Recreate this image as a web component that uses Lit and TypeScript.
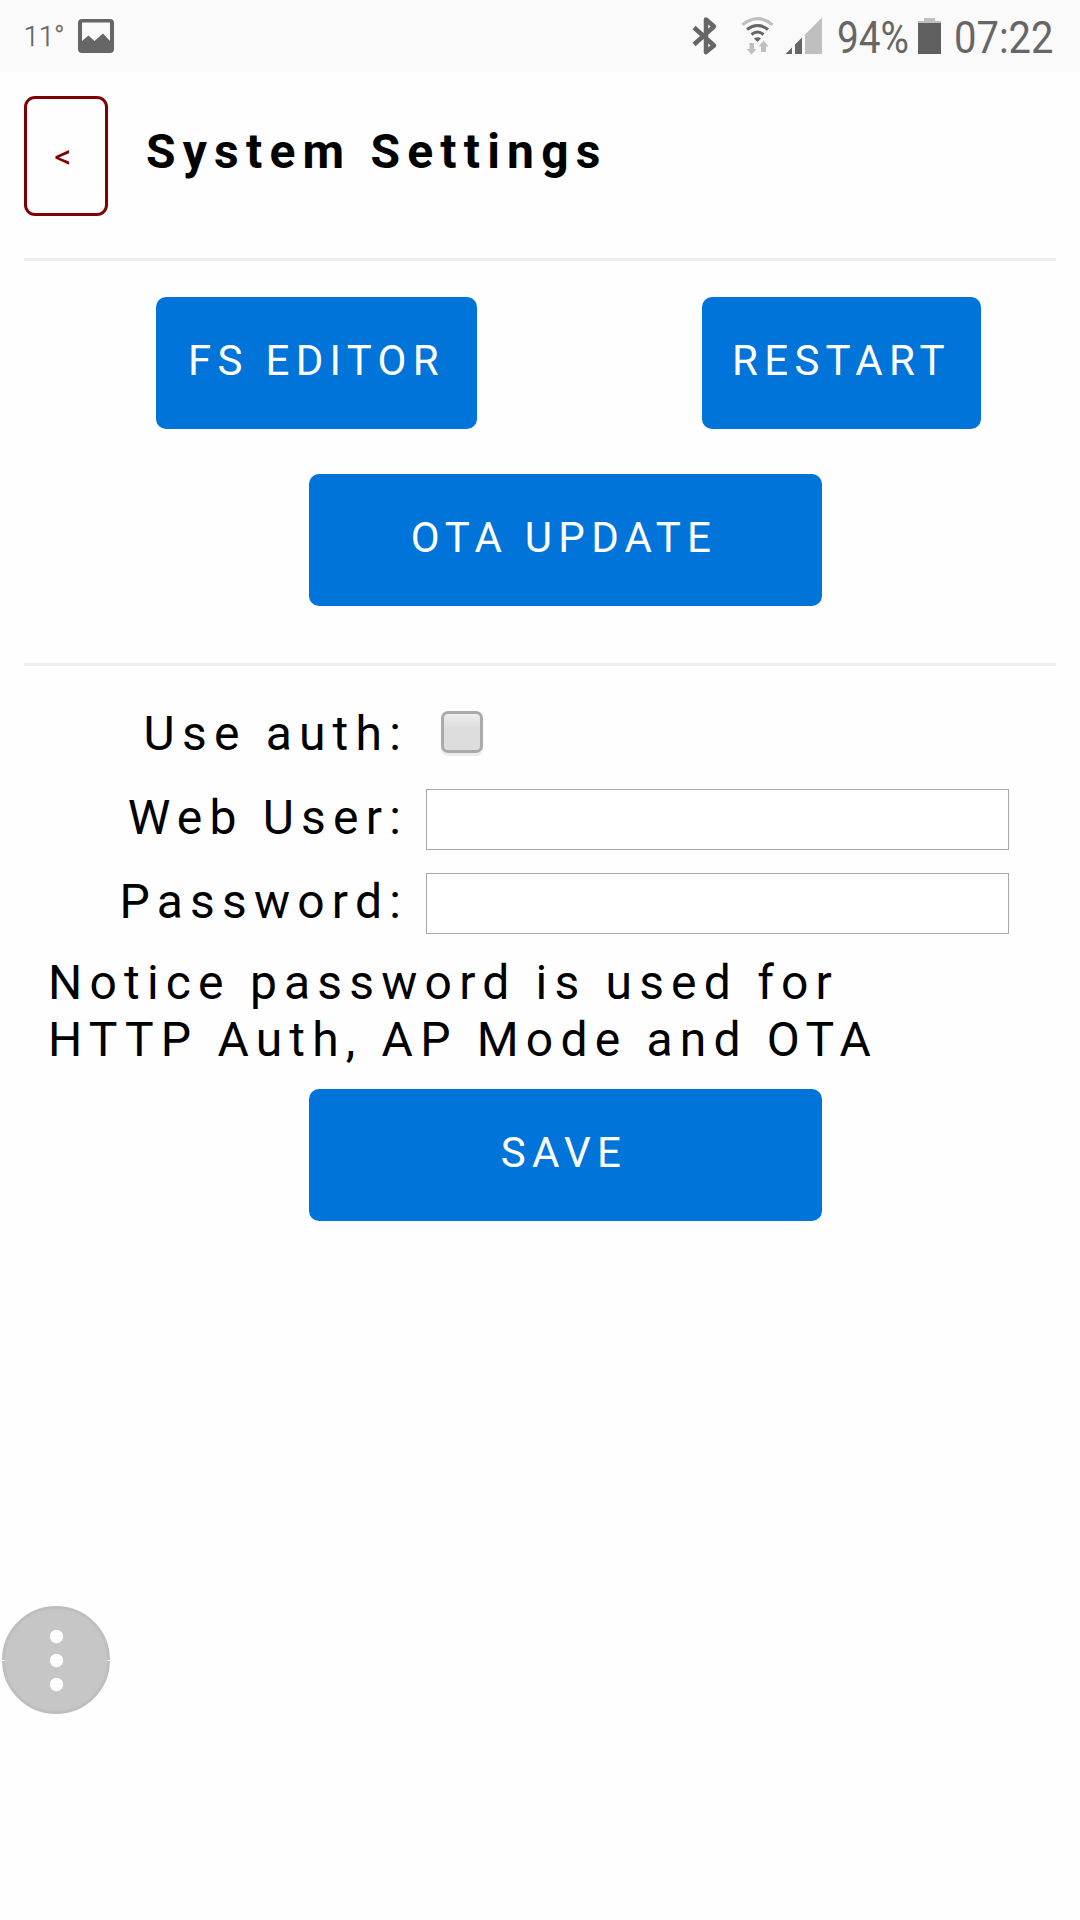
import { LitElement, html, css } from "lit";
import { customElement } from "lit/decorators.js";

@customElement("status-bar")
class StatusBar extends LitElement {
  static styles = css`
    :host { display: flex; height: 72px; background: #fafafa; justify-content: space-between; letter-spacing: 0; }
    svg { display: block; }
    text { font-family: Roboto, sans-serif; fill: #666; }
    .dark { fill: #666; }
    .pale { fill: #bfbfbf; }
  `;
  render() {
    return html`
      <svg width="130" height="72">
        <text x="23.500" y="46" font-size="28" font-weight="300" textLength="41" stroke="#666" stroke-width="0.300">11°</text>
        <path class="dark" fill-rule="evenodd" d="M82 19H110Q114 19 114 23V49Q114 53 110 53H82Q78 53 78 49V23Q78 19 82 19ZM82 22.5V41L88.5 35.5L94.500 41L103 33.500L110 41V22.500Z"/>
      </svg>
      <svg width="410" height="72">
        <path d="M24 27.500L44 45.500L36 52V19.500L44 26.500L24 44.500" fill="none" stroke="#666" stroke-width="4.500" stroke-linejoin="round"/>
        <g fill="none" stroke-width="3">
          <path stroke="#bfbfbf" d="M72.500 24.800Q87.500 12.500 102.500 24.800"/>
          <path stroke="#666" d="M77 29.500Q87.500 21.500 98 29.500"/>
          <path stroke="#666" d="M81.500 34.500Q87.500 29.500 93.500 34.500"/>
        </g>
        <path class="dark" d="M84 38.500Q87.500 36 91 38.500L87.500 42Z"/>
        <path class="pale" d="M79.500 43H84V49H86.500L81.500 54.500L76.500 49H79.500ZM91 52H96V46.500H98.500L93.500 40.500L88.500 46.500H91Z"/>
        <path class="dark" d="M115.500 54L122 47.500V54ZM125 54V44.500L132 37.500V54Z"/>
        <path class="pale" d="M135 54V34.500L152 17.500V54Z"/>
        <text x="167" y="53" font-size="45" textLength="72" lengthAdjust="spacingAndGlyphs">94%</text>
        <path class="pale" d="M254 18H265V21H271V23H248V21H254Z"/>
        <path fill="#606060" d="M248 23H271V54H248Z"/>
        <text x="284" y="53" font-size="45" textLength="99.500" lengthAdjust="spacingAndGlyphs">07:22</text>
      </svg>
    `;
  }
}

@customElement("app-root")
class AppRoot extends LitElement {
  static styles = css`
    :host {
      display: block; height: 1920px; background: #fefefe; color: #000;
      font: 48px/57px Roboto, sans-serif; letter-spacing: 7.2px; overflow: hidden;
    }
    * { box-sizing: border-box; }
    button { font: inherit; letter-spacing: inherit; margin: 0; cursor: pointer; }
    .page { padding: 24px 24px 0; display: flex; flex-direction: column; }
    .header { display: flex; height: 162px; gap: 38px; }
    .back {
      width: 84px; height: 120px; border: 3px solid #800000; border-radius: 11px; background: none;
      color: #800000; font-size: 34px; letter-spacing: 6px; padding: 0;
    }
    h1 { margin: 27px 0 0; font-size: 48px; line-height: 57px; font-weight: 700; }
    .rule { height: 3px; background: #eee; }
    .actions { display: flex; flex-wrap: wrap; padding: 36px 75px 57px 132px; justify-content: space-between; row-gap: 45px; }
    .btn {
      height: 132px; border: 0; border-radius: 10px; background: #0074d9; color: #fff;
      font-size: 42px; line-height: 126px; letter-spacing: 6.3px; padding: 0 0 4px; text-align: center;
    }
    .editor { width: 321px; }
    .restart { width: 279px; }
    .wide { width: 513px; padding-right: 3px; }
    .ota { margin: 0 153px; }
    .tight { letter-spacing: 0.118em; }
    .form { display: grid; grid-template-columns: 384px 583px; column-gap: 18px; grid-auto-rows: 84px; padding-top: 39px; }
    .form label { text-align: right; }
    .field { height: 61px; width: 583px; border: 1px solid #a9a9a9; background: #fff; margin: 0; padding: 0 6px; font: inherit; border-radius: 0; outline: none; }
    .check {
      appearance: none; width: 42px; height: 42px; margin: 6px 0 0 15px; border: 3px solid #aaa;
      border-radius: 7px; background: linear-gradient(#eee, #ddd 38%, #ddd); box-shadow: 0 3px #ebebeb;
    }
    .notice { margin: -3px 0 0 24px; width: 900px; }
    .save { margin: 21px 0 0 285px; }
    .fab { position: absolute; left: 2px; top: 1606px; border: 0; padding: 0; background: none; width: 108px; height: 108px; }
    .fab svg { display: block; }
  `;
  render() {
    return html`
      <status-bar></status-bar>
      <main class="page">
        <header class="header">
          <button class="back">&lt;</button>
          <h1>System Settings</h1>
        </header>
        <div class="rule"></div>
        <section class="actions">
          <button class="btn editor">FS EDITOR</button>
          <button class="btn restart">RESTART</button>
          <button class="btn wide ota"><span class="tight">O</span>TA UPDATE</button>
        </section>
        <div class="rule"></div>
        <section class="form">
          <label for="auth">Use auth:</label><input id="auth" class="check" type="checkbox">
          <label for="user">Web User:</label><input id="user" class="field" type="text">
          <label for="pass">Password:</label><input id="pass" class="field" type="password">
        </section>
        <p class="notice">Notice password is used for<br>HTTP Auth, AP Mode and <span class="tight">O</span>TA</p>
        <button class="btn wide save">SAVE</button>
      </main>
      <button class="fab">
        <svg width="108" height="108">
          <circle cx="54" cy="54" r="52.500" fill="#c6c6c6" stroke="#bebebe" stroke-width="3"/>
          <path fill="#fefefe" d="M0 54H3V55H0ZM105 54H108V55H105Z"/>
          <g fill="#fefefe"><circle cx="54.500" cy="30.500" r="6.700"/><circle cx="54.500" cy="54.500" r="6.700"/><circle cx="54.500" cy="78.500" r="6.700"/></g>
        </svg>
      </button>
    `;
  }
}
